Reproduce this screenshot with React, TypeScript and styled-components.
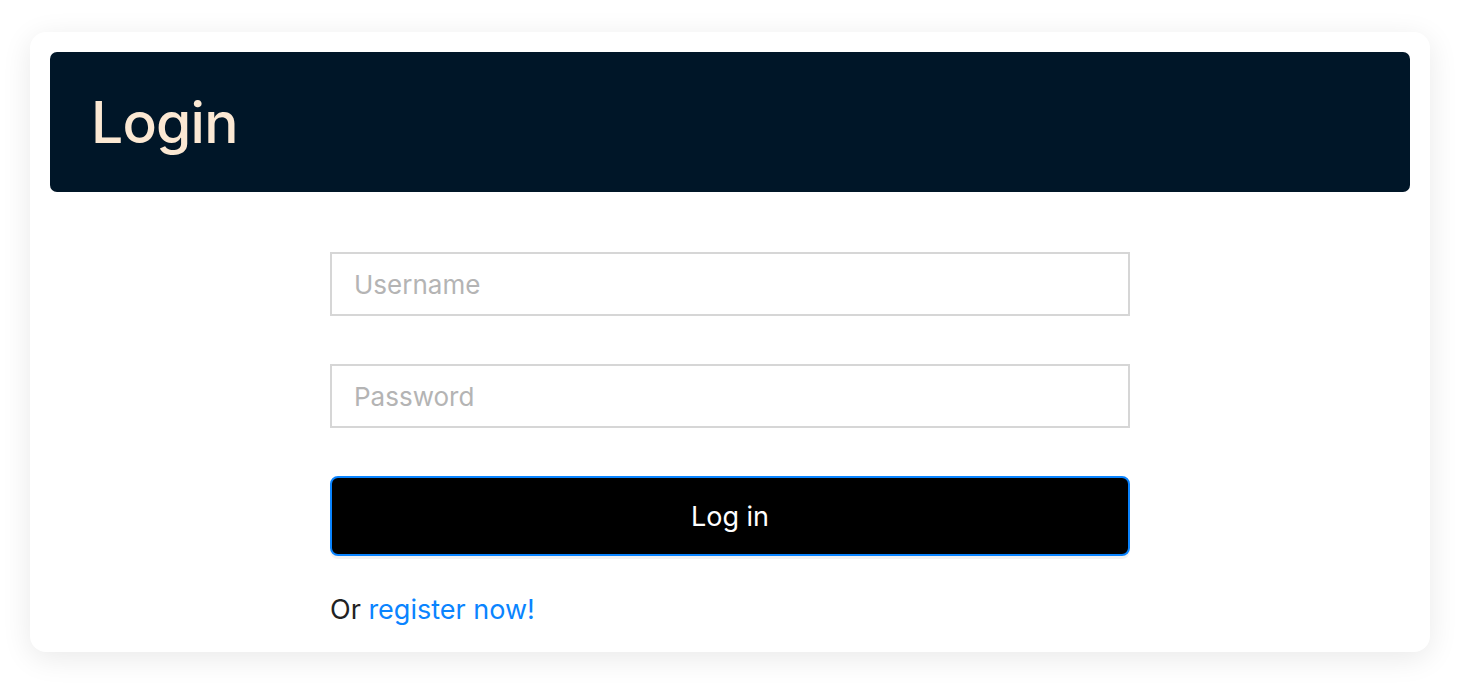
import React from "react";
import styled, { createGlobalStyle } from "styled-components";

const Global = createGlobalStyle`
  html, body { margin: 0; padding: 0; background: #ffffff; }
  body { font-family: Inter, "Noto Sans", "Liberation Sans", sans-serif; }
  * { box-sizing: border-box; }
`;

const Page = styled.div`
  padding: 32px 32px 40px 30px;
`;

const Card = styled.div`
  width: 1400px;
  background: #ffffff;
  border-radius: 16px;
  box-shadow: 0 6px 30px rgba(0, 0, 0, 0.09);
  padding: 20px 20px 26px;
`;

const Header = styled.div`
  height: 140px;
  background: #001628;
  border-radius: 7px;
  display: flex;
  align-items: center;
  padding-left: 41px;
`;

const Title = styled.h1`
  margin: 0;
  color: #fbe8d3;
  font-size: 57px;
  font-weight: 500;
  letter-spacing: -0.8px;
`;

const Form = styled.form`
  width: 800px;
  margin: 60px auto 0;
  display: flex;
  flex-direction: column;
`;

const Input = styled.input`
  height: 64px;
  border: 2px solid #d6d6d6;
  border-radius: 0;
  padding: 0 22px;
  font-family: inherit;
  font-size: 26px;
  color: #222;
  margin-bottom: 48px;
  outline: none;
  &::placeholder { color: #b4b4b4; }
`;

const Button = styled.button`
  height: 80px;
  background: #000;
  color: #fff;
  border: 2px solid #0a84ff;
  border-radius: 8px;
  font-family: inherit;
  font-size: 27px;
  font-weight: 400;
  box-shadow: 0 3px 0 rgba(0, 0, 0, 0.05);
  cursor: pointer;
`;

const Footer = styled.p`
  margin: 38px 0 0;
  font-size: 27px;
  line-height: 32px;
  color: #222;
`;

const Link = styled.a`
  color: #0a84ff;
  text-decoration: none;
`;

export default function App() {
  return (
    <>
      <Global />
      <Page>
        <Card>
          <Header>
            <Title>Login</Title>
          </Header>
          <Form onSubmit={(e) => e.preventDefault()}>
            <Input placeholder="Username" />
            <Input placeholder="Password" type="password" />
            <Button type="submit">Log in</Button>
            <Footer>
              Or <Link href="#">register now!</Link>
            </Footer>
          </Form>
        </Card>
      </Page>
    </>
  );
}
